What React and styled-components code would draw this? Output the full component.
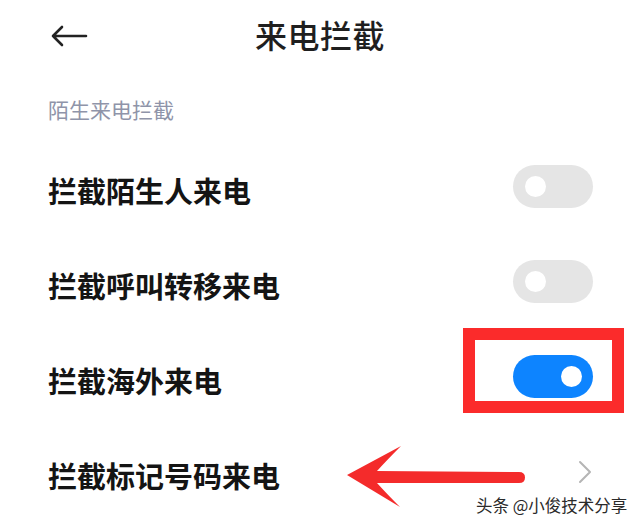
import React from "react";
import styled, { createGlobalStyle } from "styled-components";

const Global = createGlobalStyle`
  html, body { margin: 0; padding: 0; background: #ffffff; }
  body { font-family: "Noto Sans CJK SC", "Noto Sans", sans-serif; }
`;

const Page = styled.div`
  position: relative;
  width: 640px;
  height: 528px;
  overflow: hidden;
  background: #ffffff;
  display: flex;
  flex-direction: column;
`;

const Header = styled.header`
  height: 68px;
  display: grid;
  grid-template-columns: 1fr auto 1fr;
  align-items: center;
`;

const BackButton = styled.div`
  padding-left: 50px;
  display: flex;
  align-items: center;
  height: 100%;
  padding-top: 4px;
`;

const Title = styled.h1`
  margin: 0;
  font-size: 32px;
  line-height: 32px;
  font-weight: 500;
  color: #1f1f1f;
  letter-spacing: 0.5px;
`;

const SectionLabel = styled.div`
  margin-top: 31px;
  padding-left: 48px;
  font-size: 21px;
  line-height: 21px;
  color: #8f94a9;
`;

const List = styled.div`
  margin-top: 22px;
  display: flex;
  flex-direction: column;
`;

const Row = styled.div`
  position: relative;
  height: 95px;
  display: flex;
  align-items: center;
  justify-content: space-between;
  padding: 0 47px 0 48px;
`;

const Label = styled.span`
  font-size: 29px;
  line-height: 29px;
  font-weight: 700;
  color: #141414;
  padding-top: 2px;
`;

const Track = styled.div`
  position: relative;
  width: 80px;
  height: 43px;
  border-radius: 22px;
  background: ${(p) => (p.$on ? "#0d84ff" : "#e5e5e5")};
  margin-top: -6px;
`;

const Knob = styled.div`
  position: absolute;
  top: 11px;
  ${(p) => (p.$on ? "right: 11px;" : "left: 12px;")}
  width: 21px;
  height: 21px;
  border-radius: 50%;
  background: #ffffff;
`;

const Highlight = styled.div`
  position: absolute;
  left: -50px;
  top: -27px;
  width: 161px;
  height: 85px;
  box-sizing: border-box;
  border: 12px solid #fb2b2b;
  pointer-events: none;
`;

const Chevron = styled.svg`
  margin-right: 1px;
  margin-top: -6px;
`;

const Annotation = styled.svg`
  position: absolute;
  left: 344px;
  top: 17px;
  pointer-events: none;
`;

const Watermark = styled.div`
  position: absolute;
  left: 476px;
  top: 494px;
  font-size: 16.5px;
  line-height: 22px;
  color: #2a2a2a;
  white-space: nowrap;
  text-shadow: 0 0 2px #ffffff, 0 0 2px #ffffff;
`;

function Toggle({ on }) {
  return (
    <Track $on={on}>
      <Knob $on={on} />
    </Track>
  );
}

export default function App() {
  return (
    <Page>
      <Global />
      <Header>
        <BackButton>
          <svg width="38" height="24" viewBox="0 0 38 24">
            <path
              d="M3 12 H36 M12 3 L3 12 L12 21"
              fill="none"
              stroke="#222"
              strokeWidth="2.6"
              strokeLinecap="round"
              strokeLinejoin="round"
            />
          </svg>
        </BackButton>
        <Title>来电拦截</Title>
        <div />
      </Header>
      <SectionLabel>陌生来电拦截</SectionLabel>
      <List>
        <Row>
          <Label>拦截陌生人来电</Label>
          <Toggle on={false} />
        </Row>
        <Row>
          <Label>拦截呼叫转移来电</Label>
          <Toggle on={false} />
        </Row>
        <Row>
          <Label>拦截海外来电</Label>
          <Track $on>
            <Knob $on />
            <Highlight />
          </Track>
        </Row>
        <Row>
          <Label>拦截标记号码来电</Label>
          <Chevron width="14" height="24" viewBox="0 0 14 24">
            <path
              d="M2 2 L12 12 L2 22"
              fill="none"
              stroke="#b5b5b5"
              strokeWidth="2"
              strokeLinecap="round"
              strokeLinejoin="round"
            />
          </Chevron>
          <Annotation width="184" height="70" viewBox="0 0 184 70">
            <path
              d="M57 2 L3 31 L56 63 Q43 50 33 39 L175 39 Q181 39 181 33.5 Q181 28 175 28 L33 27 Q43 16 57 2 Z"
              fill="#f42b2b"
            />
          </Annotation>
        </Row>
      </List>
      <Watermark>头条 @小俊技术分享</Watermark>
    </Page>
  );
}
